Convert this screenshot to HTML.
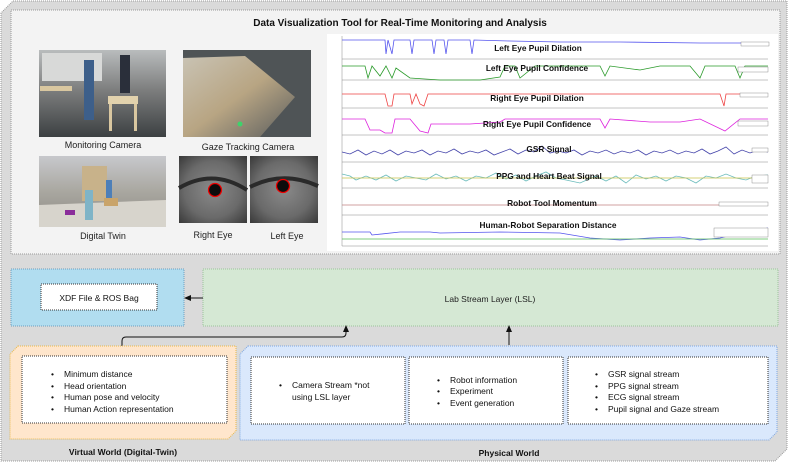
<!DOCTYPE html>
<html><head><meta charset="utf-8"><style>
html,body{margin:0;padding:0;background:#fff;}
svg{display:block;font-family:"Liberation Sans",Arial,sans-serif;}
</style></head><body>
<svg width="789" height="463" viewBox="0 0 789 463" xmlns="http://www.w3.org/2000/svg">
<defs>
<linearGradient id="mon" x1="0" y1="0" x2="0" y2="1"><stop offset="0" stop-color="#b9bcbd"/><stop offset="0.45" stop-color="#7e7f7f"/><stop offset="1" stop-color="#3c4042"/></linearGradient>
<linearGradient id="gaze" x1="0" y1="0" x2="1" y2="1"><stop offset="0" stop-color="#c9c3b4"/><stop offset="0.5" stop-color="#b8a583"/><stop offset="1" stop-color="#5a5d5e"/></linearGradient>
<linearGradient id="dt" x1="0" y1="0" x2="0" y2="1"><stop offset="0" stop-color="#c7c8cc"/><stop offset="0.5" stop-color="#a9a7a0"/><stop offset="1" stop-color="#8d8a84"/></linearGradient>
<radialGradient id="eye" cx="0.5" cy="0.5" r="0.7"><stop offset="0" stop-color="#8a8a8a"/><stop offset="0.6" stop-color="#6a6a6a"/><stop offset="1" stop-color="#3a3a3a"/></radialGradient>
</defs>
<path d="M13,1 H787 V449 L775,461 H1 V13 Z" fill="#dadada" stroke="#9a9a9a" stroke-dasharray="1,1"/>
<rect x="11" y="10" width="769" height="244" fill="#f3f3f3" stroke="#9a9a9a" stroke-dasharray="1,1"/>
<text x="400" y="26" font-size="10" font-weight="bold" text-anchor="middle" fill="#111">Data Visualization Tool for Real-Time Monitoring and Analysis</text>

<rect x="39" y="50" width="127" height="87" fill="url(#mon)"/>
<rect x="42" y="53" width="60" height="28" fill="#d8d9d8"/>
<rect x="84" y="60" width="10" height="60" fill="#3d5f8a"/>
<rect x="120" y="55" width="10" height="38" fill="#2a2f3a"/>
<rect x="40" y="86" width="32" height="5" fill="#d9c7a0"/><rect x="108" y="96" width="30" height="8" fill="#e2d2ad"/>
<rect x="109" y="104" width="3" height="27" fill="#d9c7a0"/><rect x="134" y="104" width="3" height="27" fill="#d9c7a0"/>
<text x="103" y="148" font-size="9" text-anchor="middle" fill="#222">Monitoring Camera</text>

<rect x="183" y="50" width="128" height="87" fill="#4f5456"/>
<polygon points="183,58 245,56 295,97 260,137 183,137" fill="url(#gaze)"/>
<circle cx="240" cy="124" r="2.5" fill="#3dd36b"/>
<text x="248" y="150" font-size="9" text-anchor="middle" fill="#222">Gaze Tracking Camera</text>

<rect x="39" y="156" width="127" height="71" fill="url(#dt)"/>
<rect x="82" y="166" width="25" height="35" fill="#c8b28a"/>
<polygon points="39,205 166,200 166,227 39,227" fill="#d7d4cc"/>
<rect x="85" y="190" width="8" height="30" fill="#7fb4c7"/>
<rect x="106" y="180" width="6" height="20" fill="#4d7fb8"/>
<rect x="104" y="198" width="14" height="8" fill="#c9a46a"/>
<rect x="65" y="210" width="10" height="5" fill="#8a2d9a"/>
<text x="103" y="239" font-size="9" text-anchor="middle" fill="#222">Digital Twin</text>

<rect x="179" y="156" width="68" height="67" fill="url(#eye)"/>
<path d="M179,188 Q213,168 247,190" stroke="#2a2a2a" stroke-width="4" fill="none"/>
<circle cx="215" cy="190" r="6.5" fill="#0c0c0c" stroke="#e00" stroke-width="1.3"/>
<rect x="250" y="156" width="68" height="67" fill="url(#eye)"/>
<path d="M250,187 Q283,170 318,186" stroke="#2a2a2a" stroke-width="4" fill="none"/>
<circle cx="283" cy="186" r="6.5" fill="#0c0c0c" stroke="#e00" stroke-width="1.3"/>
<text x="213" y="238" font-size="9" text-anchor="middle" fill="#222">Right Eye</text>
<text x="287" y="239" font-size="9" text-anchor="middle" fill="#222">Left Eye</text>

<rect x="327" y="34" width="451" height="217" fill="#fff"/>
<g stroke="#888" stroke-width="0.5">
<line x1="342" y1="36" x2="342" y2="246"/>
<line x1="342" y1="59" x2="768" y2="59"/><line x1="342" y1="80" x2="768" y2="80"/>
<line x1="342" y1="108" x2="768" y2="108"/><line x1="342" y1="135" x2="768" y2="135"/>
<line x1="342" y1="162" x2="768" y2="162"/><line x1="342" y1="188" x2="768" y2="188"/>
<line x1="342" y1="215" x2="768" y2="215"/><line x1="342" y1="246" x2="768" y2="246"/>
</g>
<g fill="none" stroke-width="0.8">
<polyline stroke="#5555ee" points="342,40 385,40 386,54 388,40 392,54 394,40 410,40 412,54 414,40 432,40 434,54 436,40 444,40 446,54 448,40 470,40 472,54 474,40 510,41 560,42 620,42 700,43 768,43"/>
<polyline stroke="#2a9a2a" points="342,66 365,66 368,78 372,66 380,76 386,66 392,78 396,68 410,78 440,80 480,80 500,77 505,66 515,66 520,78 535,66 560,66 600,66 605,76 610,66 640,70 660,66 690,66 700,78 705,66 735,66 740,78 745,66 768,66"/>
<polyline stroke="#ee4444" points="342,94 385,94 388,106 392,106 394,94 410,94 412,104 416,94 420,104 424,106 428,94 500,94 560,94 640,94 720,94 724,106 726,94 768,94"/>
<polyline stroke="#dd22dd" points="342,119 365,119 370,130 380,130 385,133 392,133 395,119 410,119 420,131 428,133 431,124 470,124 500,122 505,119 580,119 600,119 605,128 610,119 650,122 680,122 700,119 725,131 740,119 768,119"/>
<polyline stroke="#4444aa" points="342,152 350,154 358,150 366,155 374,151 382,154 390,150 398,155 406,151 414,153 422,150 430,155 438,151 446,153 454,149 462,154 470,151 478,153 486,150 494,155 502,152 510,149 518,154 526,150 534,152 542,146 550,153 558,151 566,153 574,150 582,155 590,151 598,153 606,150 614,154 622,151 630,153 638,150 646,155 654,151 662,153 670,150 678,154 686,151 694,153 702,149 710,154 718,151 726,147 734,154 742,150 750,153 758,150 768,152"/>
<polyline stroke="#6bbcbc" points="342,174 350,176 356,180 366,176 376,180 386,175 396,181 406,176 416,178 426,180 436,174 446,179 456,176 466,181 476,176 486,178 496,173 506,179 516,175 526,181 536,176 546,172 556,178 566,180 580,183 596,176 606,181 616,176 626,183 636,175 646,179 656,176 666,181 676,176 686,178 696,183 706,176 716,178 726,174 736,178 746,180 756,176 768,175"/>
<line x1="342" y1="178" x2="768" y2="178" stroke="#c8c04a" stroke-width="0.7"/>
<line x1="342" y1="205" x2="768" y2="205" stroke="#c08080" stroke-width="0.7"/>
<polyline stroke="#5555ee" points="342,232 370,232 372,235 400,232 430,232 440,233 500,232 560,233 590,238 620,240 650,238 680,237 700,240 720,238 740,233 768,228"/>
<line x1="342" y1="239" x2="768" y2="239" stroke="#55bb55" stroke-width="0.7"/>
</g>
<g font-size="8.3" font-weight="bold" text-anchor="middle" fill="#111">
<text x="538" y="51">Left Eye Pupil Dilation</text>
<text x="537" y="71">Left Eye Pupil Confidence</text>
<text x="537" y="101">Right Eye Pupil Dilation</text>
<text x="537" y="127">Right Eye Pupil Confidence</text>
<text x="549" y="152">GSR Signal</text>
<text x="549" y="179">PPG and Heart Beat Signal</text>
<text x="552" y="206">Robot Tool Momentum</text>
<text x="548" y="228">Human-Robot Separation Distance</text>
</g>
<g fill="#fff" stroke="#777" stroke-width="0.4">
<rect x="741" y="42" width="28" height="4"/><rect x="738" y="67" width="30" height="5"/><rect x="740" y="93" width="28" height="4"/>
<rect x="738" y="121" width="30" height="5"/><rect x="752" y="148" width="16" height="4"/><rect x="752" y="175" width="16" height="8"/>
<rect x="719" y="202" width="49" height="4"/><rect x="714" y="228" width="54" height="9"/>
</g>

<rect x="11" y="269" width="173" height="57" fill="#b1ddf0" stroke="#6c9fbf" stroke-dasharray="1,1"/>
<rect x="41" y="284" width="116" height="26" fill="#fff" stroke="#333" stroke-dasharray="1,1"/>
<text x="99" y="301" font-size="8.5" text-anchor="middle" fill="#111">XDF File &amp; ROS Bag</text>
<rect x="203" y="269" width="575" height="57" fill="#d5e8d4" stroke="#9bc49a" stroke-dasharray="1,1"/>
<text x="490" y="302" font-size="8.5" text-anchor="middle" fill="#222">Lab Stream Layer (LSL)</text>
<line x1="203" y1="298" x2="189" y2="298" stroke="#111" stroke-width="1"/>
<polygon points="184,298 191,295 191,301" fill="#111"/>

<path d="M122,346 V341 Q122,337 126,337 H342 Q346,337 346,333 V331" stroke="#111" fill="none"/>
<polygon points="346,325 343,332 349,332" fill="#111"/>
<line x1="509" y1="345" x2="509" y2="331" stroke="#111"/>
<polygon points="509,325 506,332 512,332" fill="#111"/>

<path d="M18,346 H236 V431 L228,439 H10 V354 Z" fill="#ffe6cc" stroke="#e8b84a" stroke-dasharray="1,1"/>
<rect x="22" y="356" width="205" height="67" fill="#fff" stroke="#333" stroke-dasharray="1,1"/>
<g font-size="8.5" fill="#111">
<text x="64" y="377">Minimum distance</text><text x="64" y="389">Head orientation</text>
<text x="64" y="400">Human pose and velocity</text><text x="64" y="412">Human Action representation</text>
<text x="51" y="377">•</text><text x="51" y="389">•</text><text x="51" y="400">•</text><text x="51" y="412">•</text>
</g>
<text x="123" y="455" font-size="8.5" font-weight="bold" text-anchor="middle" fill="#111">Virtual World (Digital-Twin)</text>

<path d="M248,346 H777 V432 L769,440 H240 V354 Z" fill="#dae8fc" stroke="#7ea6e0" stroke-dasharray="1,1"/>
<rect x="251" y="357" width="154" height="67" fill="#fff" stroke="#333" stroke-dasharray="1,1"/>
<rect x="409" y="357" width="154" height="67" fill="#fff" stroke="#333" stroke-dasharray="1,1"/>
<rect x="568" y="357" width="200" height="67" fill="#fff" stroke="#333" stroke-dasharray="1,1"/>
<g font-size="8.5" fill="#111">
<text x="279" y="388">•</text><text x="292" y="388">Camera Stream *not</text><text x="292" y="400">using LSL layer</text>
<text x="437" y="383">•</text><text x="450" y="383">Robot information</text>
<text x="437" y="394">•</text><text x="450" y="394">Experiment</text>
<text x="437" y="406">•</text><text x="450" y="406">Event generation</text>
<text x="595" y="377">•</text><text x="608" y="377">GSR signal stream</text>
<text x="595" y="389">•</text><text x="608" y="389">PPG signal stream</text>
<text x="595" y="400">•</text><text x="608" y="400">ECG signal stream</text>
<text x="595" y="412">•</text><text x="608" y="412">Pupil signal and Gaze stream</text>
</g>
<text x="509" y="456" font-size="8.5" font-weight="bold" text-anchor="middle" fill="#111">Physical World</text>
</svg>
</body></html>
